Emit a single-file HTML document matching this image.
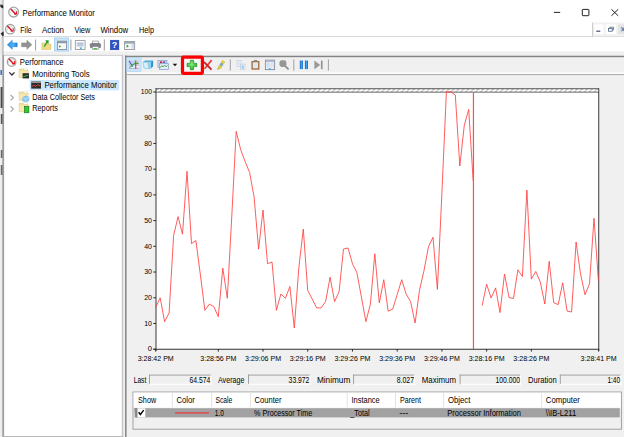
<!DOCTYPE html>
<html lang="en"><head><meta charset="utf-8"><title>Performance Monitor</title>
<style>html,body{margin:0;padding:0;background:#fff;overflow:hidden}svg{display:block}text{font-family:"Liberation Sans",sans-serif}</style>
</head><body>
<svg width="624" height="437" viewBox="0 0 624 437">
<defs><pattern id="hatch" x="156" y="88" width="4.94" height="5" patternUnits="userSpaceOnUse"><rect width="4.94" height="5" fill="#a2a2a2"/><path d="M0.4,3.0 L4.5,1.9" stroke="#fff" stroke-width="1.7"/></pattern><radialGradient id="gplus" cx="0.45" cy="0.4" r="0.6"><stop offset="0" stop-color="#8ee88e"/><stop offset="1" stop-color="#27b427"/></radialGradient><linearGradient id="gpause" x1="0" x2="1" y1="0" y2="0"><stop offset="0" stop-color="#0f62c4"/><stop offset="0.5" stop-color="#3ea4f4"/><stop offset="1" stop-color="#0f62c4"/></linearGradient><linearGradient id="gback" x1="0" x2="1" y1="0" y2="0"><stop offset="0" stop-color="#2a90ec"/><stop offset="0.6" stop-color="#4db4f6"/><stop offset="1" stop-color="#1f80dc"/></linearGradient></defs>
<rect x="0" y="0" width="624" height="437" fill="#fff" />
<rect x="0" y="51.3" width="624" height="386" fill="#f0f0f0" />
<rect x="0" y="0" width="1.7" height="437" fill="#eeeeee" />
<rect x="1.7" y="0" width="2.1" height="55" fill="#c6c6c6" />
<path d="M0.6,33.6 L3.6,31.4 V37.4 Z" fill="#222"/>
<path d="M0.4,4.2 L3.2,5.6 V8.4 L0.4,7 Z" fill="#222"/>
<rect x="0.6" y="87" width="2.6" height="21" fill="#4a4a4a" />
<rect x="0.8" y="114" width="2.2" height="10" fill="#555" />
<rect x="0.8" y="150" width="2.0" height="8" fill="#666" />
<rect x="0.8" y="165" width="2.0" height="10" fill="#666" />
<rect x="0.4" y="70" width="1.6" height="5" fill="#3c7ad0" />
<line x1="3" y1="36.5" x2="624" y2="36.5" stroke="#dadada" stroke-width="1" />
<circle cx="13.6" cy="12.1" r="4.9" fill="#fdfdfd" stroke="#a4a4a4" stroke-width="1.3"/>
<path d="M13.799999999999999,9.2 Q16.2,9.6 16.6,11.1" fill="none" stroke="#8cc8a8" stroke-width="0.6"/>
<path d="M10.7,13.299999999999999 Q10.399999999999999,11.5 11.0,10.5" fill="none" stroke="#9ad0c8" stroke-width="0.6"/>
<path d="M11.1,9.2 L15.5,13.9" fill="none" stroke="#e01424" stroke-width="1.5" stroke-linecap="round"/>
<path d="M14.0,13.85 H16.6 V11.2" fill="none" stroke="#e01828" stroke-width="1.1" stroke-linejoin="miter"/>
<text x="22.5" y="16.3" font-size="9" text-anchor="start" fill="#000" textLength="72.3" lengthAdjust="spacingAndGlyphs">Performance Monitor</text>
<line x1="554" y1="12.4" x2="560.2" y2="12.4" stroke="#222" stroke-width="1" />
<rect x="582.3" y="9.4" width="6.6" height="6.3" fill="none" stroke="#222" stroke-width="1" rx="0.6"/>
<path d="M611.4,9.3 L618.2,15.8 M618.2,9.3 L611.4,15.8" stroke="#222" stroke-width="1" fill="none"/>
<rect x="593" y="22.4" width="31" height="13.8" fill="#f2f2f2" />
<line x1="592.6" y1="22.4" x2="592.6" y2="36.8" stroke="#c8c8c8" stroke-width="1" />
<rect x="594.3" y="24.5" width="9.3" height="9.6" fill="#fff" />
<rect x="605.8" y="24.5" width="10.2" height="9.6" fill="#fff" />
<rect x="618" y="24.5" width="6" height="9.6" fill="#e3e3e3" />
<line x1="596.3" y1="31.2" x2="600.3" y2="31.2" stroke="#3d4f76" stroke-width="1.2" />
<rect x="608.6" y="28.6" width="3.6" height="2.6" fill="none" stroke="#46587e" stroke-width="0.75"/>
<path d="M609.8,28.4 V27.2 H613.6 V29.8 H612.4" fill="none" stroke="#46587e" stroke-width="0.75"/>
<path d="M621.4,27.4 L624.5,31.2 M624.5,27.4 L621.4,31.2" stroke="#5b7bb0" stroke-width="1.1"/>
<circle cx="10.2" cy="29.2" r="4.7" fill="#fdfdfd" stroke="#a4a4a4" stroke-width="1.3"/>
<path d="M10.399999999999999,26.3 Q12.799999999999999,26.7 13.2,28.2" fill="none" stroke="#8cc8a8" stroke-width="0.6"/>
<path d="M7.299999999999999,30.4 Q6.999999999999999,28.599999999999998 7.6,27.599999999999998" fill="none" stroke="#9ad0c8" stroke-width="0.6"/>
<path d="M7.699999999999999,26.3 L12.1,31.0" fill="none" stroke="#e01424" stroke-width="1.5" stroke-linecap="round"/>
<path d="M10.6,30.95 H13.2 V28.3" fill="none" stroke="#e01828" stroke-width="1.1" stroke-linejoin="miter"/>
<text x="20.2" y="32.7" font-size="9" text-anchor="start" fill="#000" textLength="11.5" lengthAdjust="spacingAndGlyphs">File</text>
<text x="42" y="32.7" font-size="9" text-anchor="start" fill="#000" textLength="22" lengthAdjust="spacingAndGlyphs">Action</text>
<text x="74.4" y="32.7" font-size="9" text-anchor="start" fill="#000" textLength="15.8" lengthAdjust="spacingAndGlyphs">View</text>
<text x="100.4" y="32.7" font-size="9" text-anchor="start" fill="#000" textLength="27.8" lengthAdjust="spacingAndGlyphs">Window</text>
<text x="139" y="32.7" font-size="9" text-anchor="start" fill="#000" textLength="15" lengthAdjust="spacingAndGlyphs">Help</text>
<path d="M7.3,44.8 L12.2,40.3 V42.9 H17.2 V46.7 H12.2 V49.3 Z" fill="url(#gback)" stroke="#1b78d4" stroke-width="0.5"/>
<path d="M31.8,44.8 L26.9,40.3 V42.9 H21.6 V46.7 H26.9 V49.3 Z" fill="#939393" stroke="#7c7c7c" stroke-width="0.5"/>
<line x1="35.6" y1="39.5" x2="35.6" y2="50.5" stroke="#9a9a9a" stroke-width="1" />
<path d="M41.8,43 H45.5 L46.5,44 H51 V49.6 H41.8 Z" fill="#f0da86" stroke="#d4b85c" stroke-width="0.5"/>
<path d="M44.2,46.6 L47.6,41.2 M45.6,41.0 H48.0 V43.6" stroke="#2c9a2c" stroke-width="1.3" fill="none"/>
<rect x="54.4" y="38" width="14.2" height="13" fill="#cce4f7" stroke="#9fcdf3" stroke-width="0.8"/>
<rect x="57.4" y="41.2" width="9.2" height="8.2" fill="#f4f6f8" stroke="#7e8a96" stroke-width="0.8"/>
<rect x="57.4" y="41.2" width="9.2" height="2.0" fill="#8c99a6" />
<rect x="58.4" y="44.2" width="2.8" height="4.4" fill="#fff" />
<path d="M59.2,45 L61.2,46.4 L59.2,47.8 Z" fill="#2a9a2a"/>
<line x1="70.9" y1="39.5" x2="70.9" y2="50.5" stroke="#9a9a9a" stroke-width="1" />
<rect x="75.3" y="40.6" width="9.8" height="8.8" fill="#fbfbfb" stroke="#8a9098" stroke-width="0.8"/>
<rect x="76.6" y="42.2" width="7.2" height="4.6" fill="#d9e3ee" />
<line x1="77.2" y1="43.4" x2="83.2" y2="43.4" stroke="#8fa3bb" stroke-width="0.7" />
<line x1="77.2" y1="45.2" x2="83.2" y2="45.2" stroke="#8fa3bb" stroke-width="0.7" />
<path d="M79.4,47.4 H82.4 L80.9,49.4 Z" fill="#30a6d8"/>
<rect x="92.3" y="41.0" width="6.2" height="3" fill="#f2f2f2" stroke="#8a8a8a" stroke-width="0.6"/>
<rect x="90.2" y="43.6" width="10.4" height="4.2" rx="0.8" fill="#7d8288" stroke="#5e6369" stroke-width="0.5"/>
<rect x="92.3" y="46.6" width="6.2" height="3" fill="#fafafa" stroke="#8a8a8a" stroke-width="0.6"/>
<line x1="93.6" y1="48.6" x2="97.2" y2="48.6" stroke="#2aa52a" stroke-width="0.9" />
<line x1="104.3" y1="39.5" x2="104.3" y2="50.5" stroke="#9a9a9a" stroke-width="1" />
<rect x="110.3" y="40.2" width="8.6" height="9.6" fill="#2b50c8" stroke="#1c3aa0" stroke-width="0.5"/>
<text x="114.6" y="48.3" font-size="9" text-anchor="middle" fill="#fff" font-weight="bold">?</text>
<rect x="124.5" y="41.6" width="10.2" height="7.9" fill="#f4f6f8" stroke="#8a9098" stroke-width="0.8"/>
<rect x="124.5" y="41.6" width="10.2" height="2.0" fill="#9aa5b0" />
<rect x="131.6" y="44.0" width="2.4" height="4.8" fill="#cfdbe8" />
<path d="M126.6,44.6 L128.8,46.2 L126.6,47.8 Z" fill="#2a9a2a"/>
<rect x="4" y="55.3" width="119" height="381" fill="#fff" />
<line x1="3.2" y1="55" x2="3.2" y2="437" stroke="#9c9c9c" stroke-width="1.8" />
<line x1="4" y1="55.4" x2="123" y2="55.4" stroke="#cfcfcf" stroke-width="1" />
<line x1="122.5" y1="55" x2="122.5" y2="437" stroke="#c6c6ca" stroke-width="1.5" />
<line x1="2.4" y1="436.6" x2="123.2" y2="436.6" stroke="#b4b4b4" stroke-width="1" />
<rect x="29.6" y="80" width="89.6" height="10.4" fill="#cce8ff" />
<circle cx="11.6" cy="62.0" r="4.3" fill="#fdfdfd" stroke="#a4a4a4" stroke-width="1.3"/>
<path d="M11.799999999999999,59.1 Q14.2,59.5 14.6,61.0" fill="none" stroke="#8cc8a8" stroke-width="0.6"/>
<path d="M8.7,63.2 Q8.399999999999999,61.4 9.0,60.4" fill="none" stroke="#9ad0c8" stroke-width="0.6"/>
<path d="M9.1,59.1 L13.5,63.8" fill="none" stroke="#e01424" stroke-width="1.5" stroke-linecap="round"/>
<path d="M12.0,63.75 H14.6 V61.1" fill="none" stroke="#e01828" stroke-width="1.1" stroke-linejoin="miter"/>
<text x="19.8" y="65.3" font-size="8.8" text-anchor="start" fill="#000" textLength="43.8" lengthAdjust="spacingAndGlyphs">Performance</text>
<path d="M9.3,72.4 L11.9,75.0 L14.5,72.4" fill="none" stroke="#303030" stroke-width="1.3"/>
<rect x="23.3" y="68.2" width="4.2" height="3.4" fill="#fdfdfd" stroke="#d6d6d6" stroke-width="0.4"/>
<path d="M19.1,69.0 H22.700000000000003 L23.700000000000003,70.30000000000001 H28.1 V77.4 H19.1 Z" fill="#f3e19c" stroke="#dcc272" stroke-width="0.5"/>
<path d="M19.5,71.4 H27.700000000000003 V77.0 H19.5 Z" fill="#f7e9b4"/>
<rect x="22.6" y="73.2" width="6.4" height="5.2" fill="#2e2e2e" />
<line x1="23.4" y1="76.6" x2="28.2" y2="75.2" stroke="#3fd055" stroke-width="0.9" />
<text x="32.3" y="76.8" font-size="8.8" text-anchor="start" fill="#000" textLength="57.3" lengthAdjust="spacingAndGlyphs">Monitoring Tools</text>
<rect x="31.2" y="81.4" width="9.8" height="7.2" fill="#2c2c2c" />
<rect x="31.2" y="81.4" width="9.8" height="1.5" fill="#a4a4a4" />
<path d="M31.8,86.6 L33.8,85.2 L35.6,86.4 L37.6,84.8 L40.4,85.8" fill="none" stroke="#f04a4a" stroke-width="0.9"/>
<text x="44.4" y="88.3" font-size="8.8" text-anchor="start" fill="#000" textLength="72.4" lengthAdjust="spacingAndGlyphs">Performance Monitor</text>
<path d="M10.6,95.0 L13.3,97.7 L10.6,100.4" fill="none" stroke="#a4a4a4" stroke-width="1.15"/>
<rect x="23.3" y="91.1" width="4.2" height="3.4" fill="#fdfdfd" stroke="#d6d6d6" stroke-width="0.4"/>
<path d="M19.1,91.89999999999999 H22.700000000000003 L23.700000000000003,93.2 H28.1 V100.3 H19.1 Z" fill="#f3e19c" stroke="#dcc272" stroke-width="0.5"/>
<path d="M19.5,94.3 H27.700000000000003 V99.89999999999999 H19.5 Z" fill="#f7e9b4"/>
<path d="M22.6,97.6 L25.8,95.8 L29.0,97.2 L29.0,100.6 L25.8,102.2 L22.6,100.8 Z" fill="#8ccaf0" stroke="#5aa2d8" stroke-width="0.4"/>
<path d="M22.6,97.6 L25.8,99.0 L29.0,97.2 M25.8,99.0 V102.2" fill="none" stroke="#d8eefc" stroke-width="0.5"/>
<text x="32.3" y="99.8" font-size="8.8" text-anchor="start" fill="#000" textLength="62.7" lengthAdjust="spacingAndGlyphs">Data Collector Sets</text>
<path d="M10.6,106.4 L13.3,109.10000000000001 L10.6,111.80000000000001" fill="none" stroke="#a4a4a4" stroke-width="1.15"/>
<rect x="23.3" y="102.5" width="4.2" height="3.4" fill="#fdfdfd" stroke="#d6d6d6" stroke-width="0.4"/>
<path d="M19.1,103.3 H22.700000000000003 L23.700000000000003,104.60000000000001 H28.1 V111.7 H19.1 Z" fill="#f3e19c" stroke="#dcc272" stroke-width="0.5"/>
<path d="M19.5,105.7 H27.700000000000003 V111.3 H19.5 Z" fill="#f7e9b4"/>
<rect x="24.4" y="106.4" width="4.5" height="6.4" fill="#2ccc2c" stroke="#1a6a1a" stroke-width="0.6"/>
<text x="32.3" y="111.2" font-size="8.8" text-anchor="start" fill="#000" textLength="25.5" lengthAdjust="spacingAndGlyphs">Reports</text>
<rect x="125" y="55.5" width="499" height="381" fill="#f0f0f0" />
<line x1="125.8" y1="55.6" x2="125.8" y2="437" stroke="#8a8a8a" stroke-width="1.6" />
<line x1="125" y1="56.3" x2="624" y2="56.3" stroke="#7a7a7a" stroke-width="1.3" />
<line x1="127" y1="57.4" x2="624" y2="57.4" stroke="#d6d6d6" stroke-width="0.9" />
<line x1="127" y1="73.3" x2="624" y2="73.3" stroke="#fdfdfd" stroke-width="1.4" />
<line x1="127" y1="74.6" x2="624" y2="74.6" stroke="#a8a8a8" stroke-width="1" />
<rect x="126.8" y="57.8" width="14.2" height="13.5" fill="#cde5f8" stroke="#a9d3f3" stroke-width="0.7"/>
<rect x="128.6" y="60.5" width="10.2" height="8.2" fill="#c3d0ec" />
<rect x="128.6" y="66.0" width="10.2" height="2.7" fill="#e8eefa" />
<path d="M129,60.8 L132.6,66.6" fill="none" stroke="#4c5ec4" stroke-width="1.1"/>
<path d="M129.2,67.2 C131,67.6 131.6,65.6 132.8,64.6 C134,63.6 135,63.2 138.6,63.4" fill="none" stroke="#35b035" stroke-width="1.1"/>
<line x1="129" y1="68.4" x2="138.6" y2="68.4" stroke="#7f93c8" stroke-width="0.6" />
<line x1="135.7" y1="60.5" x2="135.7" y2="68.8" stroke="#e8352c" stroke-width="1.1" />
<path d="M143.0,62.2 L145.2,60.4 L153.2,60.4 L151.0,62.2 Z" fill="#48aedc"/>
<path d="M151.0,62.2 L153.2,60.4 L153.0,66.4 L150.6,68.6 Z" fill="#2b8fc4"/>
<path d="M143.0,62.2 L151.0,62.2 L150.6,68.6 L144.0,68.2 Z" fill="#d9f0fa" stroke="#68bce2" stroke-width="0.6"/>
<path d="M147.4,62.4 L150.9,62.4 L150.6,68.4 L148.4,68.4 Z" fill="#8fd0ec"/>
<rect x="158.0" y="60.3" width="8.9" height="7.0" fill="#dfe6f4" stroke="#8398c6" stroke-width="0.7"/>
<rect x="159.9" y="61.4" width="2.4" height="1.7" fill="#c0203a" />
<rect x="163.0" y="61.4" width="2.4" height="1.7" fill="#4a62d0" />
<rect x="159.6" y="63.7" width="8.8" height="5.8" fill="#e6ecf8" stroke="#8398c6" stroke-width="0.7"/>
<path d="M160.4,67.6 L161.8,65.6 L163.2,67.0 L164.6,65.2 L166.0,66.8 L167.6,65.4" fill="none" stroke="#3aaa3a" stroke-width="0.9"/>
<path d="M172.7,63.8 H177.2 L174.95,66.3 Z" fill="#111"/>
<rect x="182.5" y="57.2" width="19.9" height="16.1" rx="0.8" fill="#f7f7f7" stroke="#ff0000" stroke-width="3.2" stroke-linejoin="round"/>
<path d="M190.3,60.3 H193.6 V63.3 H196.8 V66.6 H193.6 V69.7 H190.3 V66.6 H187.0 V63.3 H190.3 Z" fill="url(#gplus)" stroke="#1f9a1f" stroke-width="0.7" stroke-linejoin="round"/>
<path d="M211.2,60.6 L205.0,68.2" stroke="#e64444" stroke-width="1.8" fill="none" stroke-linecap="round"/>
<path d="M204.4,62.4 L211.0,69.2" stroke="#cc2222" stroke-width="1.8" fill="none" stroke-linecap="round"/>
<path d="M217.6,69.4 L218.4,66.6 L222.4,60.2 L225.0,61.8 L221.0,68.2 Z" fill="#86a4c4"/>
<path d="M221.0,62.5 L222.4,60.2 L225.0,61.8 L223.6,64.1 Z" fill="#e6d62e"/>
<path d="M217.6,69.4 L218.4,66.6 L219.4,65.0 L222.0,66.6 L221.0,68.2 Z" fill="#e2d028"/>
<path d="M217.6,69.4 L217.9,68.2 L218.8,68.8 Z" fill="#555"/>
<line x1="230.3" y1="59.4" x2="230.3" y2="70.6" stroke="#a0a0a0" stroke-width="1" />
<rect x="237.0" y="60.5" width="4.0" height="5.9" fill="#f4f8fc" stroke="#b9c4d6" stroke-width="0.6"/>
<rect x="237.8" y="61.8" width="2.0" height="3.4" fill="#cfe2f6" />
<rect x="240.6" y="64.1" width="4.4" height="5.4" fill="#f4f8fc" stroke="#b9c4d6" stroke-width="0.6"/>
<rect x="241.6" y="65.4" width="2.2" height="3.2" fill="#9cc4ee" />
<rect x="252.1" y="61.6" width="6.7" height="7.4" fill="#dbe9f5" stroke="#a5672f" stroke-width="1.3"/>
<rect x="254.0" y="59.9" width="3.2" height="1.7" fill="#8d8d8d" />
<rect x="265.3" y="60.1" width="9.4" height="9.6" fill="#e9edf4" stroke="#6b748c" stroke-width="0.7"/>
<rect x="265.6" y="60.4" width="8.8" height="1.5" fill="#aab4c8" />
<rect x="266.6" y="62.8" width="3.0" height="4.6" fill="#cfe0f2" />
<rect x="270.4" y="62.8" width="3.4" height="4.6" fill="#dfe3ea" />
<rect x="268.8" y="68.3" width="2.0" height="1.3" fill="#2aa8e0" />
<rect x="279.4" y="60.3" width="7.0" height="6.6" rx="2.4" fill="#979797"/>
<line x1="285.2" y1="66.2" x2="288.6" y2="69.4" stroke="#8d8d8d" stroke-width="1.7" />
<line x1="293.8" y1="59.4" x2="293.8" y2="70.6" stroke="#a0a0a0" stroke-width="1" />
<rect x="299.8" y="60.5" width="3.1" height="8.6" fill="url(#gpause)" />
<rect x="304.9" y="60.5" width="3.1" height="8.6" fill="url(#gpause)" />
<path d="M314.4,60.6 L320.2,64.9 L314.4,69.2 Z" fill="#9a9a9a"/>
<rect x="320.9" y="60.6" width="1.7" height="8.6" fill="#959595" />
<line x1="328.4" y1="59.4" x2="328.4" y2="70.6" stroke="#a0a0a0" stroke-width="1" />
<rect x="156" y="92" width="443" height="257.5" fill="#fff" />
<rect x="156" y="88.4" width="443" height="4.2" fill="url(#hatch)" />
<line x1="155.5" y1="88.5" x2="599" y2="88.5" stroke="#666" stroke-width="0.8" />
<line x1="156" y1="92.5" x2="599" y2="92.5" stroke="#8a8a8a" stroke-width="0.7" />
<line x1="156" y1="88.2" x2="156" y2="351" stroke="#585858" stroke-width="1.2" />
<line x1="153.4" y1="349.3" x2="599.2" y2="349.3" stroke="#303030" stroke-width="1.05" />
<line x1="598.7" y1="88.2" x2="598.7" y2="351" stroke="#4a4a4a" stroke-width="1.1" />
<line x1="153.3" y1="349.2" x2="156" y2="349.2" stroke="#2c2c2c" stroke-width="1" />
<text x="152" y="351.4" font-size="7.8" text-anchor="end" fill="#000" textLength="4.2" lengthAdjust="spacingAndGlyphs">0</text>
<line x1="153.3" y1="323.48" x2="156" y2="323.48" stroke="#2c2c2c" stroke-width="1" />
<text x="152" y="325.68" font-size="7.8" text-anchor="end" fill="#000" textLength="7.8" lengthAdjust="spacingAndGlyphs">10</text>
<line x1="153.3" y1="297.76" x2="156" y2="297.76" stroke="#2c2c2c" stroke-width="1" />
<text x="152" y="299.96" font-size="7.8" text-anchor="end" fill="#000" textLength="7.8" lengthAdjust="spacingAndGlyphs">20</text>
<line x1="153.3" y1="272.03999999999996" x2="156" y2="272.03999999999996" stroke="#2c2c2c" stroke-width="1" />
<text x="152" y="274.23999999999995" font-size="7.8" text-anchor="end" fill="#000" textLength="7.8" lengthAdjust="spacingAndGlyphs">30</text>
<line x1="153.3" y1="246.32" x2="156" y2="246.32" stroke="#2c2c2c" stroke-width="1" />
<text x="152" y="248.51999999999998" font-size="7.8" text-anchor="end" fill="#000" textLength="7.8" lengthAdjust="spacingAndGlyphs">40</text>
<line x1="153.3" y1="220.6" x2="156" y2="220.6" stroke="#2c2c2c" stroke-width="1" />
<text x="152" y="222.79999999999998" font-size="7.8" text-anchor="end" fill="#000" textLength="7.8" lengthAdjust="spacingAndGlyphs">50</text>
<line x1="153.3" y1="194.88" x2="156" y2="194.88" stroke="#2c2c2c" stroke-width="1" />
<text x="152" y="197.07999999999998" font-size="7.8" text-anchor="end" fill="#000" textLength="7.8" lengthAdjust="spacingAndGlyphs">60</text>
<line x1="153.3" y1="169.16" x2="156" y2="169.16" stroke="#2c2c2c" stroke-width="1" />
<text x="152" y="171.35999999999999" font-size="7.8" text-anchor="end" fill="#000" textLength="7.8" lengthAdjust="spacingAndGlyphs">70</text>
<line x1="153.3" y1="143.44" x2="156" y2="143.44" stroke="#2c2c2c" stroke-width="1" />
<text x="152" y="145.64" font-size="7.8" text-anchor="end" fill="#000" textLength="7.8" lengthAdjust="spacingAndGlyphs">80</text>
<line x1="153.3" y1="117.72" x2="156" y2="117.72" stroke="#2c2c2c" stroke-width="1" />
<text x="152" y="119.92" font-size="7.8" text-anchor="end" fill="#000" textLength="7.8" lengthAdjust="spacingAndGlyphs">90</text>
<line x1="153.3" y1="92.0" x2="156" y2="92.0" stroke="#2c2c2c" stroke-width="1" />
<text x="152" y="94.2" font-size="7.8" text-anchor="end" fill="#000" textLength="11.3" lengthAdjust="spacingAndGlyphs">100</text>
<line x1="155.7" y1="349" x2="155.7" y2="351.6" stroke="#2c2c2c" stroke-width="1" />
<text x="155.7" y="361.3" font-size="8" text-anchor="middle" fill="#000" textLength="36" lengthAdjust="spacingAndGlyphs">3:28:42 PM</text>
<line x1="218.308" y1="349" x2="218.308" y2="351.6" stroke="#2c2c2c" stroke-width="1" />
<text x="218.308" y="361.3" font-size="8" text-anchor="middle" fill="#000" textLength="36" lengthAdjust="spacingAndGlyphs">3:28:56 PM</text>
<line x1="263.028" y1="349" x2="263.028" y2="351.6" stroke="#2c2c2c" stroke-width="1" />
<text x="263.028" y="361.3" font-size="8" text-anchor="middle" fill="#000" textLength="36" lengthAdjust="spacingAndGlyphs">3:29:06 PM</text>
<line x1="307.748" y1="349" x2="307.748" y2="351.6" stroke="#2c2c2c" stroke-width="1" />
<text x="307.748" y="361.3" font-size="8" text-anchor="middle" fill="#000" textLength="36" lengthAdjust="spacingAndGlyphs">3:29:16 PM</text>
<line x1="352.468" y1="349" x2="352.468" y2="351.6" stroke="#2c2c2c" stroke-width="1" />
<text x="352.468" y="361.3" font-size="8" text-anchor="middle" fill="#000" textLength="36" lengthAdjust="spacingAndGlyphs">3:29:26 PM</text>
<line x1="397.188" y1="349" x2="397.188" y2="351.6" stroke="#2c2c2c" stroke-width="1" />
<text x="397.188" y="361.3" font-size="8" text-anchor="middle" fill="#000" textLength="36" lengthAdjust="spacingAndGlyphs">3:29:36 PM</text>
<line x1="441.908" y1="349" x2="441.908" y2="351.6" stroke="#2c2c2c" stroke-width="1" />
<text x="441.908" y="361.3" font-size="8" text-anchor="middle" fill="#000" textLength="36" lengthAdjust="spacingAndGlyphs">3:29:46 PM</text>
<line x1="486.62800000000004" y1="349" x2="486.62800000000004" y2="351.6" stroke="#2c2c2c" stroke-width="1" />
<text x="486.62800000000004" y="361.3" font-size="8" text-anchor="middle" fill="#000" textLength="36" lengthAdjust="spacingAndGlyphs">3:28:16 PM</text>
<line x1="531.348" y1="349" x2="531.348" y2="351.6" stroke="#2c2c2c" stroke-width="1" />
<text x="531.348" y="361.3" font-size="8" text-anchor="middle" fill="#000" textLength="36" lengthAdjust="spacingAndGlyphs">3:28:26 PM</text>
<line x1="598.6" y1="349" x2="598.6" y2="351.6" stroke="#2c2c2c" stroke-width="1" />
<text x="598.6" y="361.3" font-size="8" text-anchor="middle" fill="#000" textLength="36" lengthAdjust="spacingAndGlyphs">3:28:41 PM</text>
<polyline points="155.7,307.4 160.2,297.8 164.6,321.7 169.1,312.9 173.6,235.5 178.1,216.6 182.5,234.2 187.0,171.3 191.5,243.6 195.9,240.5 200.4,275.0 204.9,310.4 209.4,304.1 213.8,306.6 218.3,316.7 222.8,268.1 227.3,298.3 231.7,218.0 236.2,131.4 240.7,149.7 245.1,161.5 249.6,172.5 254.1,197.0 258.6,249.2 263.0,210.0 267.5,263.7 272.0,262.0 276.4,310.4 280.9,294.0 285.4,298.3 289.9,286.5 294.3,328.0 298.8,268.0 303.3,229.0 307.7,290.3 312.2,299.0 316.7,307.9 321.2,307.9 325.6,301.6 330.1,277.2 334.6,301.6 339.1,291.5 343.5,249.0 348.0,248.0 352.5,263.8 356.9,272.7 361.4,297.0 365.9,321.7 370.4,304.1 374.8,253.8 379.3,302.9 383.8,279.7 388.2,311.2 392.7,309.1 397.2,294.5 401.7,279.7 406.1,294.0 410.6,301.6 415.1,323.0 419.5,290.3 424.0,270.5 428.5,246.6 433.0,237.3 437.4,289.4 441.9,193.0 446.4,91.8 450.9,91.8 455.3,95.0 459.8,166.0 464.3,125.3 468.7,109.4 473.2,181.0" fill="none" stroke="#ff4040" stroke-width="0.85" stroke-linejoin="miter"/>
<polyline points="482.2,305.5 486.6,284.1 491.1,298.0 495.6,287.9 500.0,312.6 504.5,274.0 509.0,297.5 513.5,298.5 517.9,269.8 522.4,276.6 526.9,190.1 531.3,279.1 535.8,271.5 540.3,282.0 544.8,304.0 549.2,261.3 553.7,302.7 558.2,304.6 562.7,282.8 567.1,311.1 571.6,312.0 576.1,242.0 580.5,273.7 585.0,294.8 589.5,283.8 594.0,218.3 598.4,280.5" fill="none" stroke="#ff4040" stroke-width="0.85" stroke-linejoin="miter"/>
<line x1="473.45" y1="92.6" x2="473.45" y2="349" stroke="#ff4e4e" stroke-width="1.2" />
<text x="133.7" y="382.9" font-size="9" text-anchor="start" fill="#000" textLength="12.6" lengthAdjust="spacingAndGlyphs">Last</text>
<rect x="149" y="374.6" width="62.4" height="10.2" fill="#f0f0f0" />
<line x1="149" y1="375.1" x2="211.4" y2="375.1" stroke="#a0a0a0" stroke-width="1" />
<line x1="149.5" y1="374.6" x2="149.5" y2="384.8" stroke="#a0a0a0" stroke-width="1" />
<line x1="149" y1="384.3" x2="211.4" y2="384.3" stroke="#fff" stroke-width="1" />
<line x1="210.9" y1="374.6" x2="210.9" y2="384.8" stroke="#fff" stroke-width="1" />
<text x="210.3" y="382.9" font-size="9" text-anchor="end" fill="#000" textLength="20.8" lengthAdjust="spacingAndGlyphs">64.574</text>
<text x="218" y="382.9" font-size="9" text-anchor="start" fill="#000" textLength="26.4" lengthAdjust="spacingAndGlyphs">Average</text>
<rect x="248" y="374.6" width="62.4" height="10.2" fill="#f0f0f0" />
<line x1="248" y1="375.1" x2="310.4" y2="375.1" stroke="#a0a0a0" stroke-width="1" />
<line x1="248.5" y1="374.6" x2="248.5" y2="384.8" stroke="#a0a0a0" stroke-width="1" />
<line x1="248" y1="384.3" x2="310.4" y2="384.3" stroke="#fff" stroke-width="1" />
<line x1="309.9" y1="374.6" x2="309.9" y2="384.8" stroke="#fff" stroke-width="1" />
<text x="309.4" y="382.9" font-size="9" text-anchor="end" fill="#000" textLength="20.8" lengthAdjust="spacingAndGlyphs">33.972</text>
<text x="316.9" y="382.9" font-size="9" text-anchor="start" fill="#000" textLength="33.4" lengthAdjust="spacingAndGlyphs">Minimum</text>
<rect x="353.1" y="374.6" width="62" height="10.2" fill="#f0f0f0" />
<line x1="353.1" y1="375.1" x2="415.1" y2="375.1" stroke="#a0a0a0" stroke-width="1" />
<line x1="353.6" y1="374.6" x2="353.6" y2="384.8" stroke="#a0a0a0" stroke-width="1" />
<line x1="353.1" y1="384.3" x2="415.1" y2="384.3" stroke="#fff" stroke-width="1" />
<line x1="414.6" y1="374.6" x2="414.6" y2="384.8" stroke="#fff" stroke-width="1" />
<text x="414" y="382.9" font-size="9" text-anchor="end" fill="#000" textLength="17.2" lengthAdjust="spacingAndGlyphs">8.027</text>
<text x="421.8" y="382.9" font-size="9" text-anchor="start" fill="#000" textLength="34.2" lengthAdjust="spacingAndGlyphs">Maximum</text>
<rect x="459.6" y="374.6" width="61.4" height="10.2" fill="#f0f0f0" />
<line x1="459.6" y1="375.1" x2="521.0" y2="375.1" stroke="#a0a0a0" stroke-width="1" />
<line x1="460.1" y1="374.6" x2="460.1" y2="384.8" stroke="#a0a0a0" stroke-width="1" />
<line x1="459.6" y1="384.3" x2="521.0" y2="384.3" stroke="#fff" stroke-width="1" />
<line x1="520.5" y1="374.6" x2="520.5" y2="384.8" stroke="#fff" stroke-width="1" />
<text x="520" y="382.9" font-size="9" text-anchor="end" fill="#000" textLength="24.6" lengthAdjust="spacingAndGlyphs">100.000</text>
<text x="528" y="382.9" font-size="9" text-anchor="start" fill="#000" textLength="28.6" lengthAdjust="spacingAndGlyphs">Duration</text>
<rect x="559.8" y="374.6" width="61.4" height="10.2" fill="#f0f0f0" />
<line x1="559.8" y1="375.1" x2="621.1999999999999" y2="375.1" stroke="#a0a0a0" stroke-width="1" />
<line x1="560.3" y1="374.6" x2="560.3" y2="384.8" stroke="#a0a0a0" stroke-width="1" />
<line x1="559.8" y1="384.3" x2="621.1999999999999" y2="384.3" stroke="#fff" stroke-width="1" />
<line x1="620.6999999999999" y1="374.6" x2="620.6999999999999" y2="384.8" stroke="#fff" stroke-width="1" />
<text x="620.2" y="382.9" font-size="9" text-anchor="end" fill="#000" textLength="12.8" lengthAdjust="spacingAndGlyphs">1:40</text>
<rect x="133" y="392" width="488.4" height="37.2" fill="#f0f0f0" stroke="#9a9a9a" stroke-width="0.9"/>
<rect x="133.6" y="392.6" width="487.2" height="15" fill="#fff" />
<line x1="172.3" y1="392.6" x2="172.3" y2="407.4" stroke="#e2e2e2" stroke-width="1" />
<line x1="211.6" y1="392.6" x2="211.6" y2="407.4" stroke="#e2e2e2" stroke-width="1" />
<line x1="250.3" y1="392.6" x2="250.3" y2="407.4" stroke="#e2e2e2" stroke-width="1" />
<line x1="347.2" y1="392.6" x2="347.2" y2="407.4" stroke="#e2e2e2" stroke-width="1" />
<line x1="395.5" y1="392.6" x2="395.5" y2="407.4" stroke="#e2e2e2" stroke-width="1" />
<line x1="443.6" y1="392.6" x2="443.6" y2="407.4" stroke="#e2e2e2" stroke-width="1" />
<line x1="541.7" y1="392.6" x2="541.7" y2="407.4" stroke="#e2e2e2" stroke-width="1" />
<text x="138" y="402.8" font-size="9" text-anchor="start" fill="#000" textLength="18.2" lengthAdjust="spacingAndGlyphs">Show</text>
<text x="176.4" y="402.8" font-size="9" text-anchor="start" fill="#000" textLength="18.3" lengthAdjust="spacingAndGlyphs">Color</text>
<text x="215.4" y="402.8" font-size="9" text-anchor="start" fill="#000" textLength="17" lengthAdjust="spacingAndGlyphs">Scale</text>
<text x="254.6" y="402.8" font-size="9" text-anchor="start" fill="#000" textLength="27" lengthAdjust="spacingAndGlyphs">Counter</text>
<text x="351.5" y="402.8" font-size="9" text-anchor="start" fill="#000" textLength="28.2" lengthAdjust="spacingAndGlyphs">Instance</text>
<text x="400" y="402.8" font-size="9" text-anchor="start" fill="#000" textLength="21" lengthAdjust="spacingAndGlyphs">Parent</text>
<text x="448" y="402.8" font-size="9" text-anchor="start" fill="#000" textLength="22.3" lengthAdjust="spacingAndGlyphs">Object</text>
<text x="545.8" y="402.8" font-size="9" text-anchor="start" fill="#000" textLength="34" lengthAdjust="spacingAndGlyphs">Computer</text>
<rect x="134.6" y="408.2" width="485.2" height="9.2" fill="#a2a2a2" />
<path d="M134.4,408.2 H137.6 V417.4 H135.6 Z" fill="#868686"/>
<rect x="137.5" y="408.4" width="7.8" height="8.8" fill="#fff" />
<path d="M138.6,412.2 L140.4,414.5 L143.7,410.1" fill="none" stroke="#000" stroke-width="1.4"/>
<line x1="175" y1="412.9" x2="209" y2="412.9" stroke="#d8565c" stroke-width="1.6" />
<text x="214.8" y="415.8" font-size="9" text-anchor="start" fill="#000" textLength="9.2" lengthAdjust="spacingAndGlyphs">1.0</text>
<text x="254.1" y="415.8" font-size="9" text-anchor="start" fill="#000" textLength="58.2" lengthAdjust="spacingAndGlyphs">% Processor Time</text>
<text x="350.3" y="415.8" font-size="9" text-anchor="start" fill="#000" textLength="19.2" lengthAdjust="spacingAndGlyphs">_Total</text>
<text x="399.2" y="415.8" font-size="9" text-anchor="start" fill="#000" textLength="9" lengthAdjust="spacingAndGlyphs">---</text>
<text x="447.2" y="415.8" font-size="9" text-anchor="start" fill="#000" textLength="73.8" lengthAdjust="spacingAndGlyphs">Processor Information</text>
<text x="545.8" y="415.8" font-size="9" text-anchor="start" fill="#000" textLength="30.4" lengthAdjust="spacingAndGlyphs">\\IB-L211</text>
</svg></body></html>
